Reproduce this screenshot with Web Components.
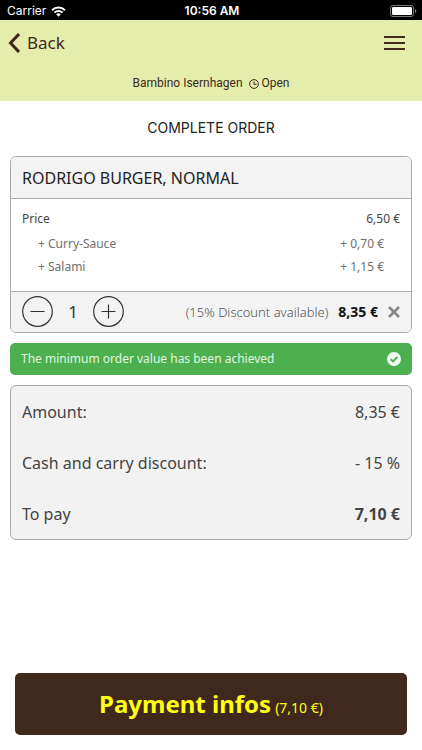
<!DOCTYPE html>
<html lang="en">
<head>
<meta charset="utf-8">
<meta name="viewport" content="width=device-width, initial-scale=1">
<title>Complete order</title>
<style>
body { margin: 0; background: #fff; font-family: "Noto Sans", "Open Sans", sans-serif; color: #444; }
</style>
</head>
<body>
<order-screen></order-screen>
<script>
const define = (name, html, setup) => {
  const template = document.createElement('template');
  template.innerHTML = '<style>*{box-sizing:border-box}:host{display:block;box-sizing:border-box}button{font:inherit;color:inherit;background:none;border:0;padding:0;margin:0;cursor:pointer}svg{display:block}</style>' + html;
  customElements.define(name, class extends HTMLElement {
    constructor() {
      super();
      this.attachShadow({ mode: 'open' }).append(template.content.cloneNode(true));
    }
    connectedCallback() { if (setup) setup(this, this.shadowRoot); }
  });
};

define('status-bar', `
<style>
:host { display: grid; grid-template-columns: 1fr auto 1fr; align-items: center; padding: 2px 5px 0 7px; background: #000; color: #fff; font: 12px/18px Inter, sans-serif; }
.left { display: flex; align-items: center; gap: 5px; }
.time { font-weight: 600; }
.battery { justify-self: end; }
</style>
<span class="left"><span>Carrier</span>
<svg width="15" height="11" viewBox="0 0 15 11" fill="none" stroke="#fff" stroke-width="2"><path d="M1 4.2a9.2 9.2 0 0 1 13 0M3.4 6.6a5.8 5.8 0 0 1 8.2 0"/><path d="M5.2 8.3a3.3 3.3 0 0 1 4.6 0L7.5 10.8z" fill="#fff" stroke="none"/></svg></span>
<span class="time">10:56 AM</span>
<svg class="battery" width="27" height="12" viewBox="0 0 27 12"><rect x=".5" y=".5" width="23" height="11" rx="2.5" fill="none" stroke="#777"/><rect x="2" y="2" width="20" height="8" rx="1.2" fill="#fff"/><path d="M25 4v4q1.3-.5 1.3-2T25 4" fill="#888"/></svg>`);

define('app-header', `
<style>
:host { background: #e4edac; color: #40291c; padding: 8px 17px 9px 8px; }
nav { display: flex; justify-content: space-between; align-items: center; }
.back { display: flex; align-items: center; gap: 7px; font-size: 17px; line-height: 30px; }
.place { display: flex; justify-content: center; align-items: center; gap: 6px; margin: 17px 0 0 9px; font: 12px/17px Roboto, sans-serif; }
.open { display: flex; align-items: center; gap: 3px; }
</style>
<nav>
<button class="back"><svg width="12" height="20" viewBox="0 0 12 20" fill="none" stroke="currentColor" stroke-width="3"><path d="M11 1L2.5 10 11 19"/></svg><span>Back</span></button>
<button aria-label="Menu"><svg width="21" height="16" viewBox="0 0 21 16" stroke="currentColor" stroke-width="2"><path d="M0 2h21M0 8h21M0 14h21"/></svg></button>
</nav>
<div class="place"><span>Bambino Isernhagen</span><span class="open"><svg width="10" height="10" viewBox="0 0 10 10" fill="none" stroke="currentColor"><circle cx="5" cy="5" r="4.4"/><path d="M5 2.5V5.3H7.6"/></svg><span>Open</span></span></div>`);

define('price-row', `
<style>
:host { display: flex; justify-content: space-between; }
</style>
<span><slot></slot></span><span><slot name="value"></slot></span>`);

define('quantity-stepper', `
<style>
:host { display: flex; align-items: center; color: #333; }
output { width: 40px; text-align: center; font-size: 17px; line-height: 24px; }
</style>
<button id="less" aria-label="Decrease quantity"><svg width="31" height="31" viewBox="0 0 31 31" fill="none" stroke="currentColor" stroke-width="1.2"><circle cx="15.5" cy="15.5" r="14.8"/><path d="M8.5 15.5h14"/></svg></button>
<output>1</output>
<button id="more" aria-label="Increase quantity"><svg width="31" height="31" viewBox="0 0 31 31" fill="none" stroke="currentColor" stroke-width="1.2"><circle cx="15.5" cy="15.5" r="14.8"/><path d="M8.5 15.5h14M15.5 8.5v14"/></svg></button>`,
(host, root) => {
  const out = root.querySelector('output');
  root.getElementById('less').onclick = () => { out.value = Math.max(1, Number(out.value) - 1); };
  root.getElementById('more').onclick = () => { out.value = Number(out.value) + 1; };
});

define('order-item', `
<style>
:host { border: 1px solid #aaa; border-radius: 6px; overflow: hidden; }
h2 { margin: 0; padding: 9px 11px 8px; background: #f3f3f3; border-bottom: 1px solid #b0acac; color: #222; font-weight: 400; font-size: 16px; line-height: 24px; }
.lines { padding: 8px 11px 13px; }
footer { display: flex; justify-content: space-between; align-items: center; padding: 4px 11px 5px; background: #f3f3f3; border-top: 1px solid #b0acac; }
.total { display: flex; align-items: center; }
</style>
<h2><slot name="name"></slot></h2>
<div class="lines"><slot></slot></div>
<footer><quantity-stepper></quantity-stepper><div class="total"><slot name="total"></slot><button aria-label="Remove item"><svg width="12" height="12" viewBox="0 0 12 12" stroke="#888" stroke-width="2.8"><path d="M1 1l10 10M11 1L1 11"/></svg></button></div></footer>`);

define('success-note', `
<style>
:host { display: flex; justify-content: space-between; align-items: center; padding: 6px 11px; border-radius: 5px; background: #4caf50; color: #e2f6e0; font-size: 12px; line-height: 20px; }
</style>
<span><slot></slot></span>
<svg width="14" height="14" viewBox="0 0 14 14"><circle cx="7" cy="7" r="7" fill="#f0faf0"/><path d="M3.7 7.1L6 9.4l4.5-4.5" fill="none" stroke="#4caf50" stroke-width="2"/></svg>`);

define('order-summary', `
<style>
:host { display: grid; gap: 27px; padding: 14px 11px 13px; border: 1px solid #aaa; border-radius: 6px; background: #f2f2f2; font-size: 16px; line-height: 24px; }
</style><slot></slot>`);

define('payment-button', `
<style>
button { display: flex; justify-content: center; align-items: baseline; gap: 4px; width: 100%; padding: 14px 10px; border-radius: 5px; background: #41281c; color: #ffff14; font-size: 14px; line-height: 20px; }
strong { font-size: 24px; line-height: 34px; font-weight: 700; }
</style>
<button><strong><slot></slot></strong> <slot name="amount"></slot></button>`);

define('order-screen', `
<style>
:host { display: flex; flex-direction: column; min-height: 100vh; }
main { flex: 1; padding: 17px 10px 20px; display: flex; flex-direction: column; gap: 10px; }
h1 { margin: 0 0 8px; text-align: center; color: #222; font: 400 14px/20px Inter, sans-serif; }
.base { margin-bottom: 1px; font-size: 12px; line-height: 24px; }
.extra { padding: 0 16px; font-size: 12px; line-height: 23px; color: #707070; }
.discount { font-size: 13px; font-weight: 300; color: #555; margin-right: 10px; }
.sum { font-size: 14px; font-weight: 700; color: #111; margin-right: 10px; }
.bottom { padding: 0 15px 15px; }
</style>
<status-bar></status-bar>
<app-header></app-header>
<main>
<h1>COMPLETE ORDER</h1>
<order-item>
<span slot="name">RODRIGO BURGER, NORMAL</span>
<price-row class="base">Price<span slot="value">6,50 €</span></price-row>
<price-row class="extra">+ Curry-Sauce<span slot="value">+ 0,70 €</span></price-row>
<price-row class="extra">+ Salami<span slot="value">+ 1,15 €</span></price-row>
<span slot="total" class="discount">(15% Discount available)</span>
<span slot="total" class="sum">8,35 €</span>
</order-item>
<success-note>The minimum order value has been achieved</success-note>
<order-summary>
<price-row>Amount:<span slot="value">8,35 €</span></price-row>
<price-row>Cash and carry discount:<span slot="value">- 15 %</span></price-row>
<price-row>To pay<strong slot="value">7,10 €</strong></price-row>
</order-summary>
</main>
<div class="bottom"><payment-button>Payment infos<span slot="amount">(7,10 €)</span></payment-button></div>`);
</script>
</body>
</html>
